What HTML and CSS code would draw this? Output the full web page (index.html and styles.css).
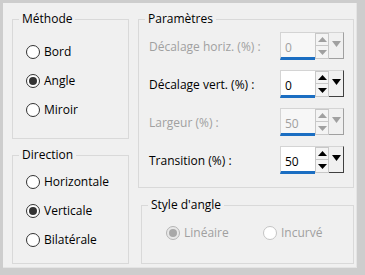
FILE: index.html
```html
<!DOCTYPE html>
<html lang="fr">
<head>
  <meta charset="UTF-8">
  <title>Angle</title>
  <link rel="stylesheet" href="styles.css">
</head>
<body>
  <div class="panel">
    <div class="col-left">
      <fieldset class="group methode">
        <legend>Méthode</legend>
        <div class="options">
          <label class="radio"><span class="dot"></span>Bord</label>
          <label class="radio"><span class="dot on"></span>Angle</label>
          <label class="radio"><span class="dot"></span>Miroir</label>
        </div>
      </fieldset>
      <fieldset class="group direction">
        <legend>Direction</legend>
        <div class="options">
          <label class="radio"><span class="dot"></span>Horizontale</label>
          <label class="radio"><span class="dot on"></span>Verticale</label>
          <label class="radio"><span class="dot"></span>Bilatérale</label>
        </div>
      </fieldset>
    </div>

    <div class="col-right">
      <fieldset class="group params">
        <legend>Paramètres</legend>

        <div class="row disabled">
          <span class="label">Décalage horiz. (%) :</span>
          <div class="spin">
            <div class="field">0</div>
            <div class="arrows">
              <span class="btn"><svg width="9" height="5" viewBox="0 0 9 5"><path d="M4.5 0L9 5H0z"/></svg></span>
              <span class="btn"><svg width="9" height="5" viewBox="0 0 9 5"><path d="M0 0H9L4.5 5z"/></svg></span>
            </div>
            <div class="drop"><svg width="9" height="6" viewBox="0 0 9 6"><path d="M0 0H9L4.5 6z"/></svg></div>
          </div>
        </div>

        <div class="row">
          <span class="label">Décalage vert. (%) :</span>
          <div class="spin">
            <div class="field">0</div>
            <div class="arrows">
              <span class="btn"><svg width="9" height="5" viewBox="0 0 9 5"><path d="M4.5 0L9 5H0z"/></svg></span>
              <span class="btn"><svg width="9" height="5" viewBox="0 0 9 5"><path d="M0 0H9L4.5 5z"/></svg></span>
            </div>
            <div class="drop"><svg width="9" height="6" viewBox="0 0 9 6"><path d="M0 0H9L4.5 6z"/></svg></div>
          </div>
        </div>

        <div class="row disabled">
          <span class="label">Largeur (%) :</span>
          <div class="spin">
            <div class="field">50</div>
            <div class="arrows">
              <span class="btn"><svg width="9" height="5" viewBox="0 0 9 5"><path d="M4.5 0L9 5H0z"/></svg></span>
              <span class="btn"><svg width="9" height="5" viewBox="0 0 9 5"><path d="M0 0H9L4.5 5z"/></svg></span>
            </div>
            <div class="drop"><svg width="9" height="6" viewBox="0 0 9 6"><path d="M0 0H9L4.5 6z"/></svg></div>
          </div>
        </div>

        <div class="row">
          <span class="label">Transition (%) :</span>
          <div class="spin">
            <div class="field">50</div>
            <div class="arrows">
              <span class="btn"><svg width="9" height="5" viewBox="0 0 9 5"><path d="M4.5 0L9 5H0z"/></svg></span>
              <span class="btn"><svg width="9" height="5" viewBox="0 0 9 5"><path d="M0 0H9L4.5 5z"/></svg></span>
            </div>
            <div class="drop"><svg width="9" height="6" viewBox="0 0 9 6"><path d="M0 0H9L4.5 6z"/></svg></div>
          </div>
        </div>
      </fieldset>

      <fieldset class="group style">
        <legend>Style d'angle</legend>
        <div class="inline-options">
          <label class="radio off first"><span class="dot on"></span>Linéaire</label>
          <label class="radio off"><span class="dot"></span>Incurvé</label>
        </div>
      </fieldset>
    </div>
  </div>
</body>
</html>
```

FILE: styles.css
```css
/* General */
body {
  margin: 0;
  background-color: #cdcdcd;
  font-family: "Open Sans", "Noto Sans", sans-serif;
  font-size: 12px;
  color: #000;
}

.panel {
  box-sizing: border-box;
  width: 354px;
  height: 265px;
  margin: 3px 0 0 3px;
  padding: 9px 0 0 9px;
  background-color: #f0f0f0;
  border-right: 1px solid #e4e4e4;
  border-bottom: 1px solid #e4e4e4;
  display: flex;
  gap: 9px;
}

.col-left, .col-right {
  display: flex;
  flex-direction: column;
}

.col-left {
  width: 117px;
  gap: 9px;
}

.col-right {
  width: 216px;
  gap: 10px;
}

/* Group boxes */
.group {
  box-sizing: border-box;
  margin: 0;
  padding: 0;
  min-width: 0;
  border: 1px solid #d9d9d9;
}

.group legend {
  margin-left: 6px;
  padding: 0 3px;
  line-height: 14px;
}

.methode { height: 127px; }
.direction { height: 116px; }
.params { height: 176px; }
.style { height: 66px; margin-left: 3px; }

/* Radios */
.options {
  display: flex;
  flex-direction: column;
  gap: 13px;
  padding: 18px 0 0 13px;
}

.direction .options {
  padding-top: 12px;
}

.radio {
  display: flex;
  align-items: center;
  gap: 4px;
  height: 16px;
  line-height: 16px;
}

.dot {
  box-sizing: border-box;
  width: 14px;
  height: 14px;
  border: 1px solid #333;
  border-radius: 50%;
  background-color: #fff;
  display: flex;
  align-items: center;
  justify-content: center;
}

.dot.on::after {
  content: "";
  width: 8px;
  height: 8px;
  border-radius: 50%;
  background-color: #333;
}

.radio.off {
  color: #a0a0a0;
}

.radio.off .dot {
  border-color: #c4c4c4;
}

.radio.off .dot.on {
  background-color: #e8e8e8;
  border-color: #b4b4b4;
}

.radio.off .dot.on::after {
  background-color: #a8a8a8;
}

.inline-options {
  display: flex;
  padding: 13px 0 0 24px;
}

.inline-options .first {
  width: 97px;
}

/* Spinner rows */
.row {
  display: flex;
  align-items: center;
  height: 28px;
  margin-top: 10px;
  padding-left: 10px;
}

.params .row:first-of-type {
  margin-top: 6px;
}

.label {
  width: 131px;
}

.row.disabled .label {
  color: #a0a0a0;
}

.spin {
  display: flex;
  height: 28px;
  width: 64px;
}

.field {
  box-sizing: border-box;
  width: 35px;
  height: 28px;
  padding: 8px 0 0 4px;
  line-height: 14px;
  background-color: #fff;
  border: 1px solid #d4d4d4;
  border-right: none;
  border-bottom: 3px solid #1b6ec2;
}

.arrows {
  display: flex;
  flex-direction: column;
  width: 14px;
  height: 27px;
  border-top: 1px solid #d4d4d4;
  box-sizing: border-box;
}

.btn {
  box-sizing: border-box;
  height: 13px;
  border: 1px solid #c8c8c8;
  background-color: #f4f4f4;
  display: flex;
  align-items: center;
  justify-content: center;
}

.btn + .btn {
  border-top: none;
}

.drop {
  box-sizing: border-box;
  width: 15px;
  height: 27px;
  border-top: 1px solid #d4d4d4;
  border-right: 1px solid #404040;
  border-bottom: 1px solid #404040;
  display: flex;
  justify-content: center;
  padding-top: 8px;
}

.spin svg {
  fill: #000;
  display: block;
}

.row.disabled .field {
  color: #a0a0a0;
  background-color: #f7f7f7;
}

.row.disabled svg {
  fill: #a0a0a0;
}

.row.disabled .drop {
  border-right-color: #a0a0a0;
  border-bottom-color: #a0a0a0;
}
```
